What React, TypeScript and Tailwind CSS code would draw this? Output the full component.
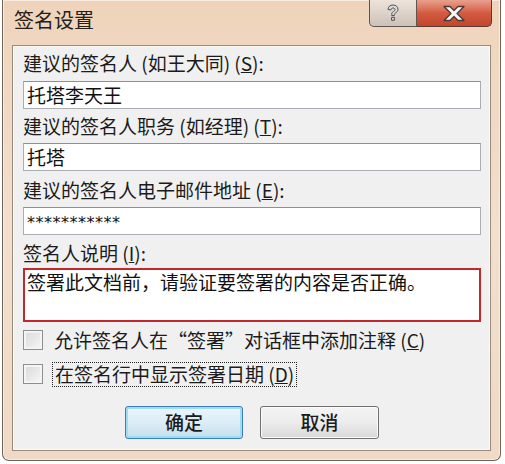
const font = "font-['Noto_Sans_CJK_SC','Noto_Sans',sans-serif]";

function Field({ value }: { value: string }) {
  return (
    <div className="h-[28px] border border-[#abadb3] border-t-[#8f9090] bg-white px-[3px] text-[19px] leading-[26px] text-[#111]">
      {value}
    </div>
  );
}

function Label({ children, className = "" }: { children: React.ReactNode; className?: string }) {
  return <div className={`text-[19px] leading-[24px] text-[#1b1b1b] ${className}`}>{children}</div>;
}

function Check({ children, focused = false, className = "" }: { children: React.ReactNode; focused?: boolean; className?: string }) {
  return (
    <div className={`flex items-center h-[22px] ${className}`}>
      <span className="w-[20px] h-[20px] border border-[#8e8f8f] bg-gradient-to-br from-[#d8d8d8] to-[#f7f7f7] shadow-[inset_0_0_0_2px_#f4f4f4]" />
      <span
        className={
          focused
            ? "ml-[9px] px-[2px] h-[25px] border border-dotted border-[#222] text-[19px] leading-[22px] text-[#1b1b1b]"
            : "ml-[11px] text-[19px] leading-[22px] text-[#1b1b1b]"
        }
      >
        {children}
      </span>
    </div>
  );
}

export default function App() {
  return (
    <div className={`w-[505px] h-[464px] bg-white ${font}`}>
      <div className="ml-[2px] w-[499px] h-[461px] rounded-b-[7px] border border-t-0 border-[#6e6259] bg-gradient-to-b from-[#efd4bb] via-[#f2dfcd] to-[#eedac6] shadow-[inset_0_0_0_1px_#f8ece0] flex flex-col">
        {/* title bar */}
        <div className="h-[45px] flex items-start justify-between pl-[11px] pr-[8px]">
          <div className="pt-[8px] text-[20px] leading-[24px] text-[#262019]">签名设置</div>
          <div className="flex h-[27px]">
            <div className="w-[48px] h-full rounded-bl-[5px] border border-t-0 border-[#5f554f] bg-gradient-to-b from-[#eee3da] to-[#cdc2b8] flex items-center justify-center">
              <svg width="14" height="18" viewBox="0 0 14 18">
                <path
                  d="M2 5.5C2 2.8 4.2 1 7 1s5 1.8 5 4.3c0 2-1.3 2.9-2.6 3.7-.9.6-1.1 1-1.1 1.8v.7H5.7v-.9c0-1.6.6-2.4 1.8-3.2 1-.6 1.6-1 1.6-1.9 0-.9-.8-1.5-2-1.5S5 4.8 5 5.9z M5.6 13.3h2.8v3H5.6z"
                  fill="#dcdcdc"
                  stroke="#505050"
                  strokeWidth="1"
                  strokeLinejoin="round"
                />
              </svg>
            </div>
            <div className="w-[75px] h-full rounded-br-[5px] border border-l-0 border-t-0 border-[#5b3a32] bg-gradient-to-b from-[#e8a08c] via-[#d45a42] to-[#c2452c] flex items-center justify-center">
              <svg width="24" height="17" viewBox="0 0 24 17">
                <path
                  d="M2 1.5h6l4 4 4-4h6l-7 7 7 7h-6l-4-4-4 4H2l7-7z"
                  fill="#f6f6f6"
                  stroke="#4a3a36"
                  strokeWidth="1.3"
                  strokeLinejoin="round"
                />
              </svg>
            </div>
          </div>
        </div>

        {/* content panel */}
        <div className="ml-[9px] w-[479px] h-[406px] border border-[#9a897b] bg-[#f0f0f0] shadow-[inset_0_0_0_1px_#fbfbfb] pt-[5px] pl-[10px] pr-[9px] flex flex-col">
          <Label>建议的签名人 (如王大同) (<u>S</u>):</Label>
          <div className="mt-[6px]">
            <Field value="托塔李天王" />
          </div>
          <Label className="mt-[5px]">建议的签名人职务 (如经理) (<u>T</u>):</Label>
          <div className="mt-[5px]">
            <Field value="托塔" />
          </div>
          <Label className="mt-[7px]">建议的签名人电子邮件地址 (<u>E</u>):</Label>
          <div className="mt-[5px]">
            <div className="h-[28px] border border-[#abadb3] border-t-[#8f9090] bg-white px-[3px] text-[16px] leading-[30px] tracking-[0.5px] text-[#111] font-['DejaVu_Sans',sans-serif]">
              ***********
            </div>
          </div>
          <Label className="mt-[6px]">签名人说明 (<u>I</u>):</Label>
          <div className="mt-[3px] h-[54px] border-2 border-[#c1272d] bg-white px-[2px] text-[19px] leading-[24px] text-[#111]">
            签署此文档前，请验证要签署的内容是否正确。
          </div>
          <Check className="mt-[7px]">允许签名人在“签署”对话框中添加注释 (<u>C</u>)</Check>
          <Check className="mt-[12px]" focused>
            在签名行中显示签署日期 (<u>D</u>)
          </Check>
          <div className="mt-[21px] flex justify-center gap-[17px]">
            <button className="w-[118px] h-[33px] rounded-[3px] border border-[#3a7db0] bg-gradient-to-b from-[#eaf6fc] via-[#dcedf6] to-[#c5dfee] shadow-[inset_0_0_0_2px_#9fdcf4] text-[19px] font-medium text-[#1b1b1b]">
              确定
            </button>
            <button className="w-[119px] h-[33px] rounded-[3px] border border-[#707070] bg-gradient-to-b from-[#f4f4f4] via-[#ececec] to-[#d9d9d9] shadow-[inset_0_0_0_1px_#fafafa] text-[19px] font-medium text-[#1b1b1b]">
              取消
            </button>
          </div>
        </div>
      </div>
    </div>
  );
}
